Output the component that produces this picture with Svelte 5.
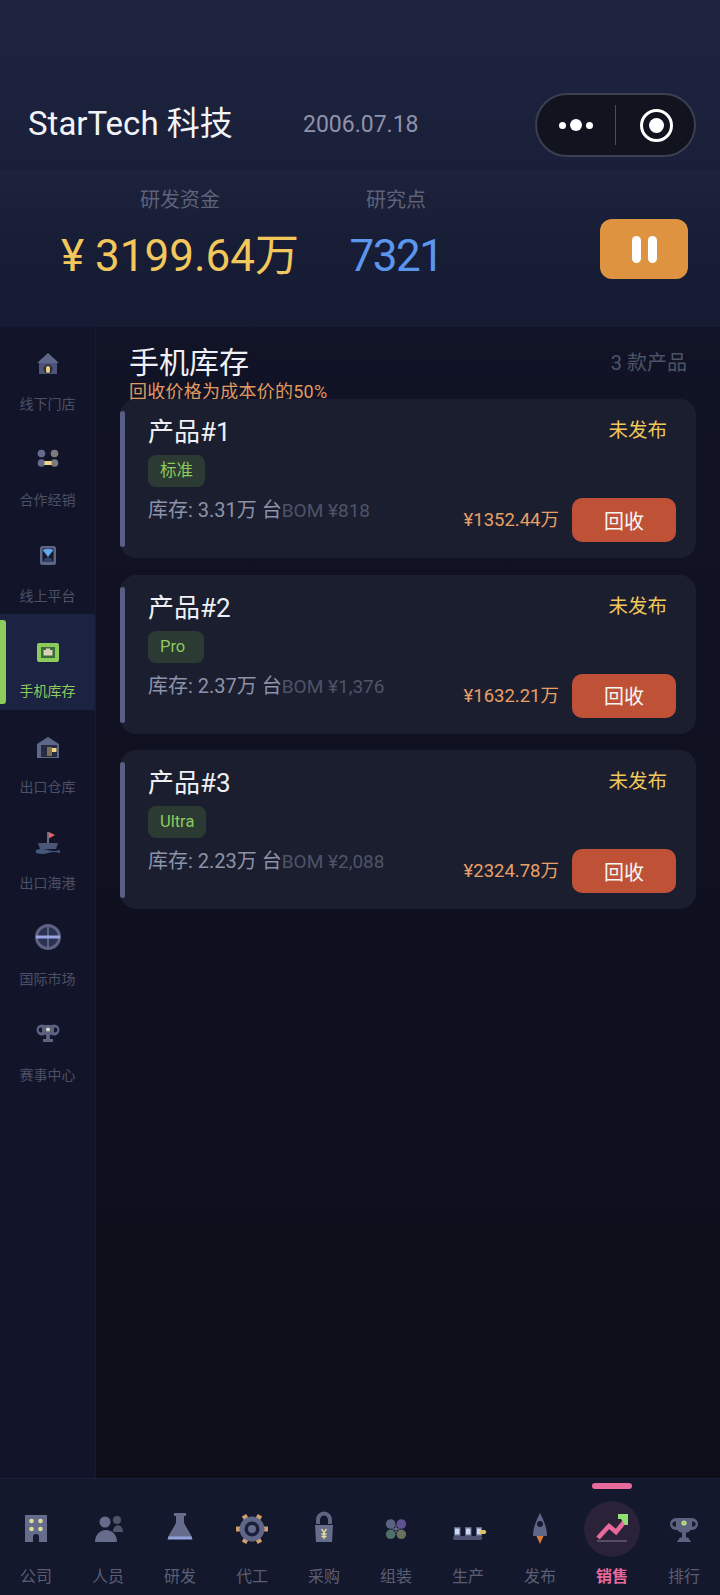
<script>
    const sideIcons = {
        store: `<path d="M7 15 H25 V27 H7Z" fill="#4d5478"/><path d="M5 16 L16 6 L27 16Z" fill="#5f6788"/><circle cx="16" cy="22" r="4.5" fill="#2a2d3c"/><rect x="14" y="19" width="4" height="7" rx="2" fill="#e8cf7c"/>`,
        dealer: `<circle cx="9.5" cy="10.5" r="3.8" fill="#666c8c"/><circle cx="22.5" cy="10.5" r="3.8" fill="#7b7a7c"/><circle cx="9.5" cy="20" r="3.8" fill="#666c8c"/><circle cx="22.5" cy="20" r="3.8" fill="#7b7a7c"/><rect x="12.5" y="18" width="7" height="4" fill="#f0d77f"/>`,
        online: `<rect x="8" y="7" width="16" height="19" rx="2.5" fill="#5e6584"/><rect x="10.5" y="9.5" width="11" height="13" fill="#12172c"/><path d="M10.5 11 Q16 8.5 21.5 11 L16 18Z" fill="#63a8e8"/><path d="M12 20 L16 18 L20 20 V22 H12Z" fill="#2f4466"/>`,
        stock: `<rect x="5" y="9" width="22" height="19" rx="2" fill="#8ccb5c"/><rect x="9" y="13" width="14" height="11" fill="#3f6a3a"/><rect x="11.5" y="16" width="9" height="5.5" fill="#d8d3b8"/><rect x="14" y="14.5" width="4" height="2" fill="#d8d3b8"/>`,
        warehouse: `<path d="M16 7 L27 14 V28 H5 V14Z" fill="#5f6788"/><rect x="9" y="15" width="16" height="12" fill="#272c40"/><rect x="15" y="17" width="5" height="9" fill="#7d7058"/><rect x="20" y="18" width="4.5" height="4" fill="#f0d77f"/>`,
        port: `<rect x="15.2" y="6" width="1.6" height="12" fill="#7b7f95"/><path d="M16.8 6 L23 9 L16.8 12.5Z" fill="#e8635f"/><path d="M6 17 H26 L24 23 H8Z" fill="#4c5676"/><path d="M4 24 Q10 22 16 24 T28 24 V27 Q22 25 16 27 T4 27Z" fill="#42597c"/>`,
        market: `<circle cx="16" cy="15" r="11.5" fill="#2a3050" stroke="#5c6280" stroke-width="3"/><rect x="15" y="3" width="2" height="24" fill="#5c6280"/><rect x="4" y="13.5" width="24" height="3" fill="#97a6e0"/>`,
        event: `<circle cx="10" cy="12" r="5.5" fill="#5c6280"/><circle cx="22" cy="12" r="5.5" fill="#5c6280"/><circle cx="9" cy="12" r="2.4" fill="#151930"/><circle cx="23" cy="12" r="2.4" fill="#151930"/><path d="M10 7 H22 V13 C22 16 19 17 16 17 C13 17 10 16 10 13Z" fill="#5c6280"/><circle cx="16" cy="11.5" r="2" fill="#dcdcc0"/><rect x="14" y="17" width="4" height="4" fill="#5c6280"/><rect x="11" y="21" width="10" height="3" fill="#5c6280"/>`,
    };

    const tabIcons = {
        company: `<rect x="7" y="4" width="22" height="27" fill="#666c8c"/><circle cx="13.5" cy="10" r="2.3" fill="#e0dc98"/><circle cx="22.5" cy="10" r="2.3" fill="#e0dc98"/><circle cx="13.5" cy="18" r="2.3" fill="#e0dc98"/><circle cx="22.5" cy="18" r="2.3" fill="#e0dc98"/><path d="M15 31 V26 A3 3 0 0 1 21 26 V31Z" fill="#171b30"/>`,
        people: `<circle cx="15" cy="11" r="5.5" fill="#666c8c"/><path d="M5 31 C5 15 27 15 27 31Z" fill="#666c8c"/><circle cx="27" cy="9" r="4" fill="#505468"/><path d="M23 21 C23 12 33 12 33 21Z" fill="#505468"/>`,
        lab: `<rect x="12" y="2" width="12" height="3" fill="#666c8c"/><path d="M14 5 H22 V12 L30 26 H6 L14 12Z" fill="#666c8c"/><path d="M6.5 25.5 H29.5 L30.5 28.5 H5.5Z" fill="#8fa3de"/>`,
        foundry: `<g fill="#d09d70"><rect x="15.5" y="2" width="5" height="5" transform="rotate(-30 18 18)"/><rect x="15.5" y="2" width="5" height="5" transform="rotate(30 18 18)"/><rect x="15.5" y="2" width="5" height="5" transform="rotate(90 18 18)"/><rect x="15.5" y="2" width="5" height="5" transform="rotate(150 18 18)"/><rect x="15.5" y="2" width="5" height="5" transform="rotate(210 18 18)"/><rect x="15.5" y="2" width="5" height="5" transform="rotate(270 18 18)"/></g><circle cx="18" cy="18" r="10" fill="#1b1f38" stroke="#5f6788" stroke-width="5"/><circle cx="18" cy="18" r="4" fill="#666c8c"/>`,
        purchase: `<path d="M12 13 V9 A6 6.5 0 0 1 24 9 V13" fill="none" stroke="#5f6580" stroke-width="4"/><path d="M9 14 H27 L26 31 H10Z" fill="#666c8c"/><path d="M15.5 18 L18 21.5 L20.5 18 M18 21.5 V28 M15.5 23 H20.5 M15.5 25.5 H20.5" fill="none" stroke="#eee29a" stroke-width="1.3"/>`,
        assemble: `<circle cx="12.7" cy="13" r="4.8" fill="#5c6280"/><circle cx="23.3" cy="13" r="4.8" fill="#5e5290"/><circle cx="12.7" cy="23.3" r="4.8" fill="#4f7068"/><circle cx="23.3" cy="23.3" r="4.8" fill="#6a7060"/><path d="M18 14.5 V21.5 M14.5 18 H21.5" stroke="#8a8ea6" stroke-width="1"/>`,
        production: `<rect x="3" y="25" width="29" height="4" rx="1.5" fill="#4d5272"/><g fill="#5f6788"><rect x="4" y="16" width="6.5" height="9"/><rect x="15" y="16" width="6.5" height="9"/><rect x="26" y="16" width="6" height="9"/></g><g fill="#c8d6f0"><rect x="5" y="17.5" width="4.5" height="6"/><rect x="16" y="17.5" width="4.5" height="6"/><rect x="27" y="17.5" width="4" height="6"/></g><rect x="30" y="19" width="5" height="4" fill="#d8c070"/><path d="M35 19 L36.5 21 L35 23Z" fill="#d8c070"/>`,
        launch: `<path d="M14 24 H22 L18 33Z" fill="#d97a3a"/><path d="M18 2 C21 8 25 16 25 25 H11 C11 16 15 8 18 2Z" fill="#5f6788"/><circle cx="18" cy="13" r="3" fill="#171b30"/>`,
        sales: `<rect x="3" y="29" width="30" height="2" fill="#5a4a68"/><path d="M4 27 L15 15 L22 21 L31 10" fill="none" stroke="#e8699c" stroke-width="4.5"/><path d="M24 3 H34 V14 H31 L27 8 H24Z" fill="#8fe070"/>`,
        ranking: `<circle cx="10" cy="13" r="6" fill="#5c6280"/><circle cx="26" cy="13" r="6" fill="#5c6280"/><circle cx="9" cy="13" r="2.6" fill="#171b30"/><circle cx="27" cy="13" r="2.6" fill="#171b30"/><path d="M10 7 H26 V14 C26 20 22 22 18 22 C14 22 10 20 10 14Z" fill="#5c6280"/><circle cx="18" cy="12" r="2.6" fill="#c4dc90"/><circle cx="18" cy="12" r="1.3" fill="#8fd050"/><rect x="16" y="22" width="4" height="5" fill="#5c6280"/><path d="M11 31 L14 26.5 H22 L25 31Z" fill="#5c6280"/>`,
    };

    const sideItems = [
        { label: "线下门店", icon: "store" },
        { label: "合作经销", icon: "dealer" },
        { label: "线上平台", icon: "online" },
        { label: "手机库存", icon: "stock", active: true },
        { label: "出口仓库", icon: "warehouse" },
        { label: "出口海港", icon: "port" },
        { label: "国际市场", icon: "market" },
        { label: "赛事中心", icon: "event" },
    ];

    const tabs = [
        { label: "公司", icon: "company" },
        { label: "人员", icon: "people" },
        { label: "研发", icon: "lab" },
        { label: "代工", icon: "foundry" },
        { label: "采购", icon: "purchase" },
        { label: "组装", icon: "assemble" },
        { label: "生产", icon: "production" },
        { label: "发布", icon: "launch" },
        { label: "销售", icon: "sales", active: true },
        { label: "排行", icon: "ranking" },
    ];

    const products = [
        { name: "产品#1", tier: "标准", stock: "3.31万", bom: "¥818", price: "¥1352.44万" },
        { name: "产品#2", tier: "Pro", stock: "2.37万", bom: "¥1,376", price: "¥1632.21万" },
        { name: "产品#3", tier: "Ultra", stock: "2.23万", bom: "¥2,088", price: "¥2324.78万" },
    ];
</script>

<div class="page">
    <header class="top">
        <div class="brand">StarTech 科技</div>
        <div class="date">2006.07.18</div>
        <div class="capsule">
            <div class="dots"><i></i><i class="big"></i><i></i></div>
            <div class="divider"></div>
            <div class="target"><span></span></div>
        </div>
    </header>

    <section class="stats">
        <div class="stat money">
            <div class="stat-label">研发资金</div>
            <div class="stat-value">¥ 3199.64万</div>
        </div>
        <div class="stat points">
            <div class="stat-label">研究点</div>
            <div class="stat-value">7321</div>
        </div>
        <button class="pause" aria-label="暂停"><i></i><i></i></button>
    </section>

    <div class="main">
        <nav class="side">
            {#each sideItems as item}
                <div class="side-item" class:active={item.active}>
                    <svg class="side-icon" viewBox="0 0 32 32">{@html sideIcons[item.icon]}</svg>
                    <span>{item.label}</span>
                </div>
            {/each}
        </nav>

        <main class="content">
            <div class="head">
                <div>
                    <h1>手机库存</h1>
                    <p class="hint">回收价格为成本价的50%</p>
                </div>
                <div class="count">3 款产品</div>
            </div>

            <div class="cards">
                {#each products as p}
                    <div class="card">
                        <div class="card-bar"></div>
                        <div class="card-main">
                            <div class="name">{p.name}</div>
                            <div class="tier">{p.tier}</div>
                            <div class="meta">
                                <span class="stock">库存: {p.stock} 台</span><span class="bom">BOM {p.bom}</span>
                            </div>
                        </div>
                        <div class="card-side">
                            <div class="status">未发布</div>
                            <div class="action">
                                <span class="price">{p.price}</span>
                                <button class="recycle">回收</button>
                            </div>
                        </div>
                    </div>
                {/each}
            </div>
        </main>
    </div>

    <footer class="tabs">
        {#each tabs as tab}
            <div class="tab" class:active={tab.active}>
                {#if tab.active}<div class="indicator"></div>{/if}
                <div class="tab-icon">
                    <svg viewBox="0 0 36 36">{@html tabIcons[tab.icon]}</svg>
                </div>
                <span>{tab.label}</span>
            </div>
        {/each}
    </footer>
</div>

<style>
    :global(body) {
        margin: 0;
        background: #0f111e;
    }
    .page {
        width: 720px;
        height: 1595px;
        display: flex;
        flex-direction: column;
        overflow: hidden;
        font-family: "Roboto", "Noto Sans CJK SC", sans-serif;
        background: linear-gradient(180deg, #1e2340 0, #161b33 330px, #111428 700px, #0e0f1b 1480px);
    }
    .top {
        height: 170px;
        box-sizing: border-box;
        padding: 93px 24px 0 28px;
        display: flex;
        align-items: flex-start;
    }
    .brand {
        width: 275px;
        height: 64px;
        line-height: 61px;
        font-size: 33px;
        color: #f2f3f7;
    }
    .date {
        height: 64px;
        line-height: 63px;
        font-size: 23px;
        color: #8d92a8;
    }
    .capsule {
        margin-left: auto;
        width: 161px;
        height: 64px;
        box-sizing: border-box;
        border: 2px solid #3b3f50;
        border-radius: 32px;
        background: #11131f;
        display: flex;
        align-items: center;
    }
    .dots {
        width: 78px;
        display: flex;
        justify-content: center;
        align-items: center;
        gap: 4px;
    }
    .dots i {
        width: 7px;
        height: 7px;
        border-radius: 50%;
        background: #fff;
    }
    .dots i.big {
        width: 12px;
        height: 12px;
    }
    .divider {
        width: 1px;
        height: 40px;
        background: #4a4d5c;
    }
    .target {
        width: 33px;
        height: 33px;
        box-sizing: border-box;
        margin-left: 24px;
        border: 3.5px solid #fff;
        border-radius: 50%;
        display: flex;
        align-items: center;
        justify-content: center;
    }
    .target span {
        width: 15px;
        height: 15px;
        border-radius: 50%;
        background: #fff;
    }

    .stats {
        height: 157px;
        box-sizing: border-box;
        position: relative;
        display: flex;
        align-items: flex-start;
        padding: 17px 32px 0 0;
        background: linear-gradient(180deg, rgba(255, 255, 255, 0.015), rgba(255, 255, 255, 0) 80px);
    }
    .stat {
        display: flex;
        flex-direction: column;
        align-items: center;
    }
    .stat.money {
        margin-left: 60px;
        width: 240px;
    }
    .stat.points {
        margin-left: 48px;
        width: 96px;
    }
    .stat-label {
        font-size: 20px;
        line-height: 26px;
        color: #5e6379;
    }
    .stat-value {
        margin-top: 14px;
        font-size: 44px;
        line-height: 58px;
        white-space: nowrap;
    }
    .money .stat-value {
        color: #f2c75c;
    }
    .points .stat-value {
        color: #5b96ee;
        letter-spacing: -1.5px;
    }
    .pause {
        margin: 32px 0 0 auto;
        width: 88px;
        height: 60px;
        border: none;
        border-radius: 12px;
        background: #de9340;
        display: flex;
        align-items: center;
        justify-content: center;
        gap: 7px;
        padding: 0;
    }
    .pause i {
        width: 9px;
        height: 27px;
        border-radius: 5px;
        background: #fff;
    }

    .main {
        flex: 1;
        min-height: 0;
        display: flex;
    }
    .side {
        width: 96px;
        flex: none;
        background: #12152a;
        border-right: 1px solid #171a30;
        box-sizing: border-box;
    }
    .side-item {
        height: 96px;
        position: relative;
        display: flex;
        flex-direction: column;
        align-items: center;
        padding-top: 20px;
        box-sizing: border-box;
        font-size: 14px;
        color: #4c5066;
    }
    .side-item:nth-child(n + 4) {
        top: -1px;
    }
    .side-icon {
        width: 32px;
        height: 32px;
    }
    .side-item span {
        margin-top: 15px;
        line-height: 20px;
    }
    .side-item.active {
        background: #1c2242;
        color: #8ccb5c;
    }
    .side-item.active::before {
        content: "";
        position: absolute;
        left: 0;
        top: 6px;
        bottom: 6px;
        width: 6px;
        border-radius: 0 3px 3px 0;
        background: #8ccb5c;
    }

    .content {
        flex: 1;
        min-width: 0;
        box-sizing: border-box;
        padding: 17px 24px 0 24px;
        background: linear-gradient(180deg, #111326, #0d0e19);
    }
    .head {
        display: flex;
        justify-content: space-between;
        align-items: flex-start;
        padding: 0 9px;
    }
    h1 {
        margin: 0;
        font-size: 30px;
        line-height: 38px;
        font-weight: 400;
        color: #eef0f5;
    }
    .hint {
        margin: -2px 0 0;
        font-size: 18px;
        line-height: 24px;
        letter-spacing: 0.25px;
        color: #e09a5f;
    }
    .count {
        margin-top: 6px;
        font-size: 20px;
        line-height: 26px;
        color: #4f5368;
    }
    .cards {
        display: flex;
        flex-direction: column;
        gap: 16.5px;
        margin-top: -5px;
    }
    .card {
        height: 159px;
        box-sizing: border-box;
        position: relative;
        display: flex;
        border-radius: 16px;
        background: #1b1e2e;
    }
    .card-bar {
        position: absolute;
        left: 0;
        top: 12px;
        bottom: 11px;
        width: 5px;
        border-radius: 3px;
        background: #585f82;
    }
    .card-main {
        flex: 1;
        padding: 16px 0 0 28px;
    }
    .name {
        font-size: 26px;
        line-height: 34px;
        color: #eef0f5;
    }
    .tier {
        display: inline-block;
        margin-top: 6px;
        height: 32px;
        min-width: 32px;
        padding: 0 12px;
        line-height: 32px;
        border-radius: 8px;
        background: #2b3a33;
        font-size: 16.5px;
        color: #8ccb5c;
    }
    .meta {
        margin-top: 10px;
        font-size: 20px;
        line-height: 26px;
        white-space: nowrap;
    }
    .stock {
        color: #8d92a8;
    }
    .bom {
        font-size: 19px;
        color: #4f5368;
    }
    .card-side {
        display: flex;
        flex-direction: column;
        align-items: flex-end;
        padding: 19px 20px 0 0;
    }
    .status {
        margin-right: 9px;
        font-size: 19.5px;
        line-height: 26px;
        color: #f2c75c;
    }
    .action {
        margin-top: 54px;
        display: flex;
        align-items: center;
        gap: 13px;
    }
    .price {
        font-size: 18.5px;
        line-height: 24px;
        color: #e9a066;
        white-space: nowrap;
    }
    .recycle {
        width: 104px;
        height: 44px;
        border: none;
        border-radius: 10px;
        background: #bf5236;
        color: #f5f5f5;
        font-family: inherit;
        font-size: 20px;
        padding: 0;
    }

    .tabs {
        height: 117px;
        flex: none;
        display: flex;
        background: #14182c;
        border-top: 1px solid #1a1e36;
        box-sizing: border-box;
    }
    .tab {
        width: 72px;
        position: relative;
        display: flex;
        flex-direction: column;
        align-items: center;
        font-size: 16px;
        color: #5a5e74;
    }
    .tab-icon {
        margin-top: 22px;
        width: 56px;
        height: 56px;
        border-radius: 50%;
        display: flex;
        align-items: center;
        justify-content: center;
    }
    .tab-icon svg {
        width: 36px;
        height: 36px;
        overflow: visible;
    }
    .tab span {
        margin-top: 8px;
        line-height: 24px;
    }
    .tab.active {
        color: #e8699c;
        font-weight: 700;
    }
    .tab.active .tab-icon {
        background: #2a2238;
    }
    .indicator {
        position: absolute;
        top: 4px;
        left: 16px;
        width: 40px;
        height: 6px;
        border-radius: 3px;
        background: #e8699c;
    }
</style>
